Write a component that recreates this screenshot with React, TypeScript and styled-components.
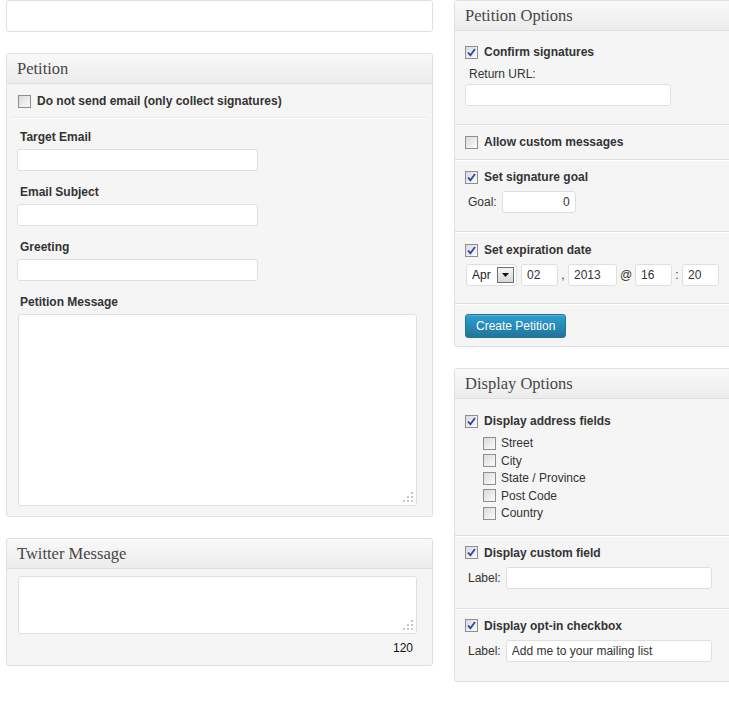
import React from 'react';
import styled, { createGlobalStyle } from 'styled-components';

const GlobalStyle = createGlobalStyle`
  html, body {
    margin: 0;
    padding: 0;
    background: #fff;
    overflow: hidden;
  }
  body {
    font-family: "Liberation Sans", Arial, sans-serif;
    font-size: 12px;
    color: #333;
  }
`;

const Page = styled.div`
  display: flex;
  align-items: flex-start;
  gap: 21px;
  width: 729px;
  box-sizing: border-box;
  padding-left: 6px;
  overflow: hidden;
`;

const Column = styled.div<{ $width: number }>`
  flex: none;
  width: ${(p) => p.$width}px;
  display: flex;
  flex-direction: column;
  gap: 21px;
`;

const TitleInput = styled.input`
  box-sizing: border-box;
  width: 100%;
  height: 32px;
  margin: 0;
  border: 1px solid #dfdfdf;
  border-radius: 3px;
  background: #fff;
  outline: none;
`;

const Box = styled.section`
  border: 1px solid #dfdfdf;
  border-radius: 3px;
  background: #f5f5f5;
`;

const BoxHeader = styled.h3`
  margin: 0;
  height: 29px;
  line-height: 29px;
  padding: 0 10px;
  border-bottom: 1px solid #dfdfdf;
  border-radius: 3px 3px 0 0;
  background: linear-gradient(#f9f9f9, #ececec);
  font-family: "Liberation Serif", Georgia, serif;
  font-size: 16.5px;
  font-weight: normal;
  color: #464646;
`;

const BoxBody = styled.div<{ $pad: string }>`
  padding: ${(p) => p.$pad};
`;

const Section = styled.div<{ $top: number; $bottom: number; $last?: boolean }>`
  display: flex;
  flex-direction: column;
  align-items: flex-start;
  padding: ${(p) => p.$top}px 10px ${(p) => p.$bottom}px;
  border-bottom: ${(p) => (p.$last ? 'none' : '1px solid #dfdfdf')};
  box-shadow: ${(p) => (p.$last ? 'none' : '0 1px 0 #fff')};
`;

const CheckRow = styled.label<{ $bold?: boolean; $height?: number }>`
  box-sizing: border-box;
  display: flex;
  align-items: center;
  gap: ${(p) => (p.$bold ? 6 : 5)}px;
  height: ${(p) => p.$height ?? 16}px;
  padding-top: ${(p) => (p.$bold ? 2 : 1)}px;
  font-weight: ${(p) => (p.$bold ? 'bold' : 'normal')};
  color: #333;
  white-space: nowrap;
`;

const CheckBox = styled.span`
  box-sizing: border-box;
  display: inline-flex;
  align-items: center;
  justify-content: center;
  width: 13px;
  height: 13px;
  flex: none;
  border: 1px solid #8e8f8f;
  background: linear-gradient(135deg, #d9dadb, #fcfcfc);
`;

const SubList = styled.div`
  display: flex;
  flex-direction: column;
  margin: 6px 0 0 18px;
`;

const FieldsArea = styled.div`
  padding: 11px 10px 0 5px;
`;

const FieldLabel = styled.div`
  margin-left: 3px;
  line-height: 16px;
  font-weight: bold;
  color: #333;
`;

const TextInput = styled.input<{ $width: number; $align?: string }>`
  box-sizing: border-box;
  width: ${(p) => p.$width}px;
  height: 22px;
  margin: 0;
  padding: 0 5px;
  border: 1px solid #dfdfdf;
  border-radius: 3px;
  background: #fff;
  font-family: "Liberation Sans", Arial, sans-serif;
  font-size: 12px;
  color: #333;
  text-align: ${(p) => p.$align ?? 'left'};
  outline: none;
`;

const Field = styled.div`
  display: flex;
  flex-direction: column;
  gap: 4px;
  margin-bottom: 13px;
`;

const MessageBlock = styled.div`
  margin-top: 4px;
`;

const AreaWrap = styled.div<{ $height: number }>`
  position: relative;
  box-sizing: border-box;
  height: ${(p) => p.$height}px;
  margin-left: 1px;
  border: 1px solid #dfdfdf;
  border-radius: 3px;
  background: #fff;
`;

const TextArea = styled.textarea`
  box-sizing: border-box;
  display: block;
  width: 100%;
  height: 100%;
  margin: 0;
  border: none;
  background: transparent;
  resize: none;
  outline: none;
`;

const Grip = styled.svg`
  position: absolute;
  right: 3px;
  bottom: 3px;
`;

const Counter = styled.div`
  margin-top: 7px;
  padding-right: 4px;
  line-height: 14px;
  text-align: right;
  color: #111;
`;

const SmallLabel = styled.div`
  margin: 7px 0 2px 4px;
  line-height: 16px;
`;

const InlineRow = styled.div`
  display: flex;
  align-items: center;
  gap: 5px;
  margin-top: 7px;
  padding-left: 3px;
`;

const DateRow = styled.div`
  display: flex;
  align-items: center;
  margin-top: 7px;
  padding-left: 1px;
`;

const Select = styled.div`
  box-sizing: border-box;
  display: flex;
  align-items: center;
  justify-content: space-between;
  width: 51px;
  height: 22px;
  margin-right: 4px;
  padding: 0 2px 0 5px;
  border: 1px solid #dfdfdf;
  border-radius: 3px;
  background: #fff;
  color: #222;
`;

const DropButton = styled.span`
  box-sizing: border-box;
  display: flex;
  align-items: center;
  justify-content: center;
  width: 17px;
  height: 16px;
  border: 1px solid #6f6f6f;
  background: linear-gradient(#f4f4f4, #d8d8d8);
`;

const Sep = styled.span<{ $width: number }>`
  width: ${(p) => p.$width}px;
  text-align: center;
  color: #333;
`;

const Button = styled.button`
  box-sizing: border-box;
  height: 24px;
  padding: 0 10px;
  border: 1px solid #21759b;
  border-radius: 3px;
  background: linear-gradient(#2e9fd2, #21759b);
  box-shadow: inset 0 1px 0 rgba(120, 200, 230, 0.5);
  font-family: "Liberation Sans", Arial, sans-serif;
  font-size: 12px;
  color: #fff;
  cursor: pointer;
`;

function Check({ checked }: { checked?: boolean }) {
  return (
    <CheckBox>
      {checked && (
        <svg width="9" height="9" viewBox="0 0 9 9">
          <path d="M1 4.5 L3.4 7.2 L8 1" fill="none" stroke="#2d48a6" strokeWidth="1.8" />
        </svg>
      )}
    </CheckBox>
  );
}

function ResizeGrip() {
  const dots = [
    [8, 0],
    [4, 4],
    [8, 4],
    [0, 8],
    [4, 8],
    [8, 8],
  ];
  return (
    <Grip width="10" height="10" viewBox="0 0 10 10">
      {dots.map(([x, y]) => (
        <rect key={`${x}-${y}`} x={x} y={y} width="2" height="2" fill="#c6c6c6" />
      ))}
    </Grip>
  );
}

function MessageArea({ height }: { height: number }) {
  return (
    <AreaWrap $height={height}>
      <TextArea />
      <ResizeGrip />
    </AreaWrap>
  );
}

const addressFields = ['Street', 'City', 'State / Province', 'Post Code', 'Country'];

export default function App() {
  return (
    <>
      <GlobalStyle />
      <Page>
        <Column $width={427}>
          <TitleInput />

          <Box>
            <BoxHeader>Petition</BoxHeader>
            <BoxBody $pad="0 5px 10px">
              <Section $top={8} $bottom={9} style={{ paddingLeft: 6, borderBottomColor: '#e9e9e9' }}>
                <CheckRow $bold>
                  <Check />
                  Do not send email (only collect signatures)
                </CheckRow>
              </Section>
              <FieldsArea>
                <Field>
                  <FieldLabel>Target Email</FieldLabel>
                  <TextInput $width={241} />
                </Field>
                <Field>
                  <FieldLabel>Email Subject</FieldLabel>
                  <TextInput $width={241} />
                </Field>
                <Field>
                  <FieldLabel>Greeting</FieldLabel>
                  <TextInput $width={241} />
                </Field>
                <FieldLabel>Petition Message</FieldLabel>
                <MessageBlock>
                  <MessageArea height={192} />
                </MessageBlock>
              </FieldsArea>
            </BoxBody>
          </Box>

          <Box>
            <BoxHeader>Twitter Message</BoxHeader>
            <BoxBody $pad="7px 15px 10px 10px">
              <MessageArea height={58} />
              <Counter>120</Counter>
            </BoxBody>
          </Box>
        </Column>

        <Column $width={300}>
          <Box>
            <BoxHeader>Petition Options</BoxHeader>
            <Section $top={12} $bottom={18}>
              <CheckRow $bold>
                <Check checked />
                Confirm signatures
              </CheckRow>
              <SmallLabel>Return URL:</SmallLabel>
              <TextInput $width={206} />
            </Section>
            <Section $top={8} $bottom={10}>
              <CheckRow $bold>
                <Check />
                Allow custom messages
              </CheckRow>
            </Section>
            <Section $top={8} $bottom={18}>
              <CheckRow $bold>
                <Check checked />
                Set signature goal
              </CheckRow>
              <InlineRow>
                Goal:
                <TextInput $width={74} $align="right" defaultValue="0" />
              </InlineRow>
            </Section>
            <Section $top={9} $bottom={17}>
              <CheckRow $bold>
                <Check checked />
                Set expiration date
              </CheckRow>
              <DateRow>
                <Select>
                  Apr
                  <DropButton>
                    <svg width="7" height="4" viewBox="0 0 7 4">
                      <path d="M0 0 H7 L3.5 4 Z" fill="#111" />
                    </svg>
                  </DropButton>
                </Select>
                <TextInput $width={37} defaultValue="02" />
                <Sep $width={10}>,</Sep>
                <TextInput $width={49} defaultValue="2013" />
                <Sep $width={18}>@</Sep>
                <TextInput $width={37} defaultValue="16" />
                <Sep $width={10}>:</Sep>
                <TextInput $width={37} defaultValue="20" />
              </DateRow>
            </Section>
            <Section $top={10} $bottom={8} $last>
              <Button>Create Petition</Button>
            </Section>
          </Box>

          <Box>
            <BoxHeader>Display Options</BoxHeader>
            <Section $top={13} $bottom={13}>
              <CheckRow $bold>
                <Check checked />
                Display address fields
              </CheckRow>
              <SubList>
                {addressFields.map((name) => (
                  <CheckRow key={name} $height={17.5}>
                    <Check />
                    {name}
                  </CheckRow>
                ))}
              </SubList>
            </Section>
            <Section $top={8} $bottom={19}>
              <CheckRow $bold>
                <Check checked />
                Display custom field
              </CheckRow>
              <InlineRow>
                Label:
                <TextInput $width={206} />
              </InlineRow>
            </Section>
            <Section $top={8} $bottom={19} $last>
              <CheckRow $bold>
                <Check checked />
                Display opt-in checkbox
              </CheckRow>
              <InlineRow>
                Label:
                <TextInput $width={206} defaultValue="Add me to your mailing list" />
              </InlineRow>
            </Section>
          </Box>
        </Column>
      </Page>
    </>
  );
}
